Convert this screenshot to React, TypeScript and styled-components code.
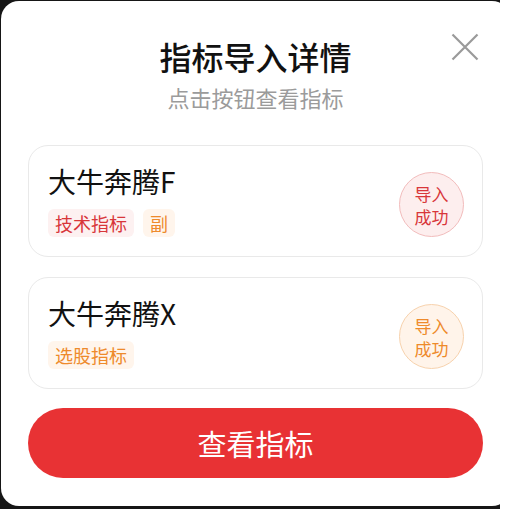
import React from 'react'
import styled, { createGlobalStyle } from 'styled-components'

const GlobalStyle = createGlobalStyle`
    html, body {
        margin: 0;
        padding: 0;
        background: #ffffff;
        overflow: hidden;
    }
    body {
        font-family: "Noto Sans CJK SC", "Noto Sans", sans-serif;
    }
`

type Tone = 'red' | 'orange'

const tones = {
    red: { text: '#d8363a', tagBg: '#fdf1f1', ring: '#f2bcbc', ringBg: '#fdeeee' },
    orange: { text: '#ee8a2b', tagBg: '#fff5ec', ring: '#f7d2ad', ringBg: '#fff4ea' },
}

const indicators: { name: string; tags: { label: string; tone: Tone }[]; tone: Tone }[] = [
    {
        name: '大牛奔腾F',
        tags: [
            { label: '技术指标', tone: 'red' },
            { label: '副', tone: 'orange' },
        ],
        tone: 'red',
    },
    {
        name: '大牛奔腾X',
        tags: [{ label: '选股指标', tone: 'orange' }],
        tone: 'orange',
    },
]

function CloseIcon() {
    return (
        <svg width="28" height="28" viewBox="0 0 28 28" fill="none">
            <path d="M1.5 1.5L26.5 26.5M26.5 1.5L1.5 26.5" stroke="#9a9a9a" strokeWidth="2.2" />
        </svg>
    )
}

export default function App() {
    return (
        <>
            <GlobalStyle />
            <Backdrop>
                <Modal>
                    <CloseButton aria-label="关闭">
                        <CloseIcon />
                    </CloseButton>
                    <Header>
                        <Title>指标导入详情</Title>
                        <SubTitle>点击按钮查看指标</SubTitle>
                    </Header>
                    <List>
                        {indicators.map((item) => (
                            <Card key={item.name}>
                                <Info>
                                    <Name>{item.name}</Name>
                                    <TagRow>
                                        {item.tags.map((t) => (
                                            <Tag key={t.label} $tone={t.tone}>
                                                {t.label}
                                            </Tag>
                                        ))}
                                    </TagRow>
                                </Info>
                                <Stamp $tone={item.tone}>
                                    <span>导入</span>
                                    <span>成功</span>
                                </Stamp>
                            </Card>
                        ))}
                    </List>
                    <ViewButton>查看指标</ViewButton>
                </Modal>
            </Backdrop>
        </>
    )
}

const Backdrop = styled.div`
    width: 500px;
    height: 509px;
    background: #161616;
    padding: 1px 0 0 1px;
    box-sizing: border-box;
`

const Modal = styled.div`
    position: relative;
    width: 509px;
    height: 505px;
    box-sizing: border-box;
    background: #ffffff;
    border-radius: 18px;
    padding: 33px 27px 28px;
    display: flex;
    flex-direction: column;
`

const CloseButton = styled.button`
    position: absolute;
    top: 32px;
    right: 31px;
    padding: 0;
    border: none;
    background: none;
    display: flex;
`

const Header = styled.div`
    display: flex;
    flex-direction: column;
    align-items: center;
`

const Title = styled.div`
    font-size: 32px;
    line-height: 44px;
    font-weight: 500;
    color: #111111;
`

const SubTitle = styled.div`
    margin-top: 4px;
    font-size: 22px;
    line-height: 30px;
    color: #9b9b9b;
`

const List = styled.div`
    margin-top: 33px;
    display: flex;
    flex-direction: column;
    gap: 20px;
`

const Card = styled.div`
    height: 112px;
    box-sizing: border-box;
    border: 1px solid #e9e9e9;
    border-radius: 20px;
    padding: 17px 18px 19px 19px;
    display: flex;
    align-items: flex-end;
    justify-content: space-between;
`

const Info = styled.div`
    display: flex;
    flex-direction: column;
    gap: 10px;
`

const Name = styled.div`
    font-size: 28px;
    line-height: 36px;
    color: #111111;
`

const TagRow = styled.div`
    display: flex;
    gap: 9px;
`

const Tag = styled.span<{ $tone: Tone }>`
    height: 28px;
    padding: 0 7px;
    border-radius: 6px;
    display: flex;
    align-items: center;
    font-size: 18px;
    color: ${({ $tone }) => tones[$tone].text};
    background: ${({ $tone }) => tones[$tone].tagBg};
`

const Stamp = styled.div<{ $tone: Tone }>`
    width: 65px;
    height: 65px;
    box-sizing: border-box;
    border-radius: 50%;
    border: 1px solid ${({ $tone }) => tones[$tone].ring};
    background: ${({ $tone }) => tones[$tone].ringBg};
    color: ${({ $tone }) => tones[$tone].text};
    display: flex;
    flex-direction: column;
    align-items: center;
    justify-content: center;
    font-size: 17px;
    line-height: 23px;
`

const ViewButton = styled.button`
    margin-top: 19px;
    height: 71px;
    border: none;
    border-radius: 36px;
    background: #e83234;
    color: #ffffff;
    font-family: inherit;
    font-size: 29px;
    letter-spacing: 0;
`
